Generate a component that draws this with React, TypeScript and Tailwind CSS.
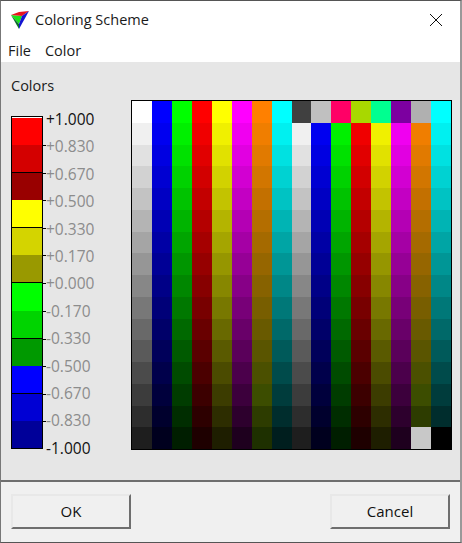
const labels = ['+1.000', '+0.830', '+0.670', '+0.500', '+0.330', '+0.170', '+0.000', '-0.170', '-0.330', '-0.500', '-0.670', '-0.830', '-1.000']

const barColors = ['#ff0000', '#d40000', '#990000', '#ffff00', '#d4d400', '#999900', '#00ff00', '#00d400', '#009900', '#0000ff', '#0000d4', '#000099']

const topRow = ['#ffffff', '#0000ff', '#00ff00', '#ff0000', '#ffff00', '#ff00ff', '#ff8000', '#00ffff', '#404040', '#c0c0c0', '#ff0066', '#a8d800', '#00ff90', '#7c00a0', '#b0b0b0', '#00ffff']

const bases = [
  [255, 255, 255],
  [0, 0, 255],
  [0, 255, 0],
  [255, 0, 0],
  [255, 255, 0],
  [255, 0, 255],
  [255, 128, 0],
  [0, 255, 255],
]

// orange drifts to olive as it darkens, so its green channel is listed by hand
const orangeGreen = [128, 126, 122, 118, 112, 110, 106, 102, 98, 94, 90, 85, 80, 77, 60, 48]

function shade(col: number, row: number) {
  const base = bases[col % 8]
  const f = 1 - row * 0.0587
  const [r, g, b] = base.map((v) => Math.round(v * f))
  return `rgb(${r}, ${col % 8 === 6 ? orangeGreen[row] : g}, ${b})`
}

function cellColor(col: number, row: number) {
  if (row === 0 && col >= 8) return topRow[col]
  if (row === 15 && col === 14) return '#c8c8c8'
  if (row === 15 && col === 15) return '#000000'
  return shade(col, row)
}

function AppIcon() {
  return (
    <svg width="20" height="20" viewBox="0 0 20 20" className="shrink-0">
      <polygon points="1,5 12,6 9,14" fill="#19e619" />
      <polygon points="19,1 12,6 1,5 9,2" fill="#e8141e" />
      <polygon points="19,1 9,19 9,14 12,6" fill="#1414d2" />
      <polygon points="1,5 9,14 9,19" fill="#0a6e2a" />
    </svg>
  )
}

function Button({ label }: { label: string }) {
  return (
    <button className="w-[120px] h-[35px] bg-[#f0f0f0] border-2 border-t-[#e8e8e8] border-l-[#e8e8e8] border-r-[#6e6e6e] border-b-[#6e6e6e] text-[15px] text-[#111]">
      {label}
    </button>
  )
}

function barSegmentClass(i: number) {
  if (i === 0) return 'relative flex-1 border-t border-t-white'
  // only every second boundary shows a line across the bar
  return i % 2 === 0 ? 'relative flex-1 border-t border-t-black' : 'relative flex-1'
}

export default function App() {
  const rows = Array.from({ length: 16 }, (_, i) => i)
  const cols = Array.from({ length: 16 }, (_, i) => i)

  return (
    <div className="w-[462px] h-[543px] flex flex-col overflow-hidden bg-[#f0f0f0] border-t border-l border-r-2 border-b border-t-[#555] border-l-[#777] border-r-[#999] border-b-[#555] font-['Open_Sans',sans-serif] text-[#1a1a1a]">
      {/* Title bar */}
      <div className="h-[38px] shrink-0 bg-white flex items-center pl-[9px] pr-[17px]">
        <AppIcon />
        <span className="ml-[5px] text-[14.5px]">Coloring Scheme</span>
        <svg width="14" height="14" viewBox="0 0 14 14" className="ml-auto" stroke="#111" fill="none">
          <path d="M1 1l12 12M13 1L1 13" />
        </svg>
      </div>

      {/* Menu */}
      <div className="h-[23px] shrink-0 bg-white flex items-start gap-[14px] pl-[7px] text-[14.5px] leading-[23px]">
        <span>File</span>
        <span>Color</span>
      </div>

      {/* Colors panel */}
      <div className="h-[420px] shrink-0 bg-[#e6e6e6] border-b-2 border-b-[#6e6e6e] pl-[10px]">
        <div className="h-[54px] pt-[14px] text-[14.5px] leading-[20px]">Colors</div>
        <div className="flex">
          <div className="flex">
            <div className="w-[32px] h-[333px] border border-black flex flex-col">
              {barColors.map((c, i) => (
                <div key={c} className={barSegmentClass(i)} style={{ backgroundColor: c }}>
                  {i > 0 && <span className="absolute top-0 -right-[4px] w-[3px] h-px bg-black" />}
                </div>
              ))}
            </div>
            <div className="flex flex-col justify-between w-[88px] h-[349px] -mt-[7px] pl-[3px] text-[15.5px] leading-[20px]">
              {labels.map((l, i) => (
                <span key={l} className={i === 0 || i === 12 ? 'text-[#111]' : 'text-[#8c8c8c]'}>
                  {l}
                </span>
              ))}
            </div>
          </div>
          <div className="w-[321px] h-[350px] -mt-[16px] border border-black grid grid-cols-16 grid-rows-16">
            {rows.map((row) =>
              cols.map((col) => <div key={`${row}-${col}`} style={{ backgroundColor: cellColor(col, row) }} />),
            )}
          </div>
        </div>
      </div>

      {/* Buttons */}
      <div className="flex-1 flex justify-between items-start pt-[12px] pl-[10px] pr-[10px]">
        <Button label="OK" />
        <Button label="Cancel" />
      </div>
    </div>
  )
}
